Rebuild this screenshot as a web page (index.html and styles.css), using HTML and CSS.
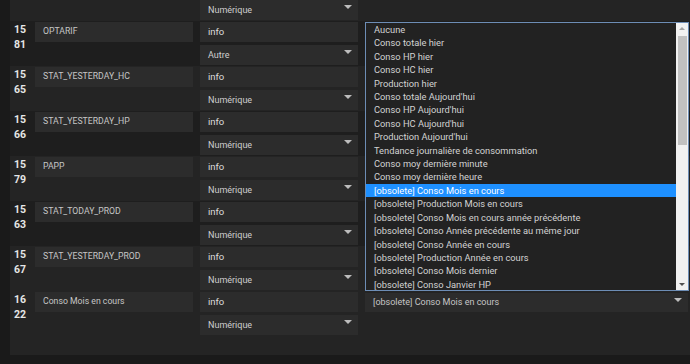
FILE: index.html
```html
<!DOCTYPE html>
<html lang="fr">
<head>
    <meta charset="UTF-8">
    <meta name="viewport" content="width=device-width, initial-scale=1.0">
    <title>Commandes</title>
    <link rel="stylesheet" href="styles.css">
</head>
<body>
    <div class="page">
        <div class="table">
            <!-- ligne coupée par le défilement -->
            <div class="row light cut">
                <div class="id"></div>
                <div class="field name"></div>
                <div class="field type"></div>
                <div class="field select subtype">Numérique</div>
            </div>

            <div class="row">
                <div class="id">15<br>81</div>
                <div class="field name">OPTARIF</div>
                <div class="field type">info</div>
                <div class="field select subtype">Autre</div>
            </div>

            <div class="row light">
                <div class="id">15<br>65</div>
                <div class="field name">STAT_YESTERDAY_HC</div>
                <div class="field type">info</div>
                <div class="field select subtype">Numérique</div>
            </div>

            <div class="row">
                <div class="id">15<br>66</div>
                <div class="field name">STAT_YESTERDAY_HP</div>
                <div class="field type">info</div>
                <div class="field select subtype">Numérique</div>
            </div>

            <div class="row light">
                <div class="id">15<br>79</div>
                <div class="field name">PAPP</div>
                <div class="field type">info</div>
                <div class="field select subtype">Numérique</div>
            </div>

            <div class="row">
                <div class="id">15<br>63</div>
                <div class="field name">STAT_TODAY_PROD</div>
                <div class="field type">info</div>
                <div class="field select subtype">Numérique</div>
            </div>

            <div class="row light">
                <div class="id">15<br>67</div>
                <div class="field name">STAT_YESTERDAY_PROD</div>
                <div class="field type">info</div>
                <div class="field select subtype">Numérique</div>
            </div>

            <div class="row light">
                <div class="id">16<br>22</div>
                <div class="field name">Conso Mois en cours</div>
                <div class="field type">info</div>
                <div class="field select subtype">Numérique</div>
                <div class="field select extra">[obsolete] Conso Mois en cours</div>
            </div>

            <div class="table-foot"></div>
        </div>

        <!-- liste déroulante ouverte -->
        <div class="listbox">
            <ul class="options">
                <li>Aucune</li>
                <li>Conso totale hier</li>
                <li>Conso HP hier</li>
                <li>Conso HC hier</li>
                <li>Production hier</li>
                <li>Conso totale Aujourd'hui</li>
                <li>Conso HP Aujourd'hui</li>
                <li>Conso HC Aujourd'hui</li>
                <li>Production Aujourd'hui</li>
                <li>Tendance journalière de consommation</li>
                <li>Conso moy dernière minute</li>
                <li>Conso moy dernière heure</li>
                <li class="selected">[obsolete] Conso Mois en cours</li>
                <li>[obsolete] Production Mois en cours</li>
                <li>[obsolete] Conso Mois en cours année précédente</li>
                <li>[obsolete] Conso Année précédente au même jour</li>
                <li>[obsolete] Conso Année en cours</li>
                <li>[obsolete] Production Année en cours</li>
                <li>[obsolete] Conso Mois dernier</li>
                <li>[obsolete] Conso Janvier HP</li>
            </ul>
            <div class="scrollbar">
                <div class="scroll-btn up"></div>
                <div class="scroll-track">
                    <div class="scroll-thumb"></div>
                </div>
                <div class="scroll-btn down"></div>
            </div>
        </div>
    </div>
</body>
</html>
```

FILE: styles.css
```css
:root {
    --page: #1a1a1a;
    --row: #1e1e1e;
    --row-light: #242424;
    --field: #2c2c2c;
    --text: #cfcfcf;
    --border: #6d8db5;
    --highlight: #1e90ff;
}

body {
    margin: 0;
    background-color: var(--page);
    font-family: Roboto, "Liberation Sans", sans-serif;
    color: var(--text);
    height: 364px;
    overflow: hidden;
}

.page {
    position: relative;
    height: 364px;
    overflow: hidden;
}

.table {
    margin-left: 10px;
    width: 680px;
}

.row {
    display: grid;
    grid-template-columns: 25px 165px 165px 1fr;
    grid-template-rows: 20px 20px;
    grid-template-areas:
        "id name type extra"
        "id . subtype extra";
    row-gap: 3px;
    padding: 1px 0;
    background-color: var(--row);
}

.row.light {
    background-color: var(--row-light);
}

.row.cut {
    margin-top: -24px;
}

.id {
    grid-area: id;
    padding: 0 0 0 4px;
    font-size: 10.5px;
    font-weight: bold;
    line-height: 15px;
    color: #e6e6e6;
}

.field {
    width: 158px;
    box-sizing: border-box;
    background-color: var(--field);
    padding: 0 8px;
    font-size: 9px;
    line-height: 19px;
    white-space: nowrap;
    overflow: hidden;
    position: relative;
}

.name {
    grid-area: name;
    font-size: 8.7px;
    color: #c6c6c6;
}

.type {
    grid-area: type;
    font-size: 9.5px;
    color: #dcdcdc;
}

.subtype {
    grid-area: subtype;
    line-height: 21px;
}

.extra {
    grid-area: extra;
    width: 323px;
    margin-top: 1px;
    align-self: start;
    color: #c6c6c6;
}

.select {
    padding-right: 20px;
}

.select::after {
    content: "";
    position: absolute;
    right: 6px;
    top: 5px;
    border-left: 4px solid transparent;
    border-right: 4px solid transparent;
    border-top: 4px solid #bdbdbd;
}

.table-foot {
    height: 19px;
    background-color: var(--row-light);
}

/* liste déroulante */
.listbox {
    position: absolute;
    left: 365px;
    top: 22px;
    width: 324px;
    height: 269px;
    box-sizing: border-box;
    border: 1px solid var(--border);
    background-color: #222;
    display: flex;
    overflow: hidden;
}

.options {
    flex: 1;
    margin: 0;
    padding: 0;
    list-style: none;
    font-size: 9.3px;
    line-height: 13.4px;
    color: #d2d2d2;
}

.options li {
    padding-left: 8px;
    white-space: nowrap;
}

.options li.selected {
    background-color: var(--highlight);
    color: #fff;
}

.scrollbar {
    width: 12px;
    display: flex;
    flex-direction: column;
    background-color: #f1f1f1;
}

.scroll-btn {
    height: 12px;
    position: relative;
}

.scroll-btn::after {
    content: "";
    position: absolute;
    left: 3px;
    border-left: 3px solid transparent;
    border-right: 3px solid transparent;
}

.scroll-btn.up::after {
    top: 4px;
    border-bottom: 3px solid #a3a3a3;
}

.scroll-btn.down::after {
    top: 5px;
    border-top: 3px solid #505050;
}

.scroll-track {
    flex: 1;
    padding: 1px 1px 0 2px;
}

.scroll-thumb {
    height: 109px;
    background-color: #c1c1c1;
}
```
